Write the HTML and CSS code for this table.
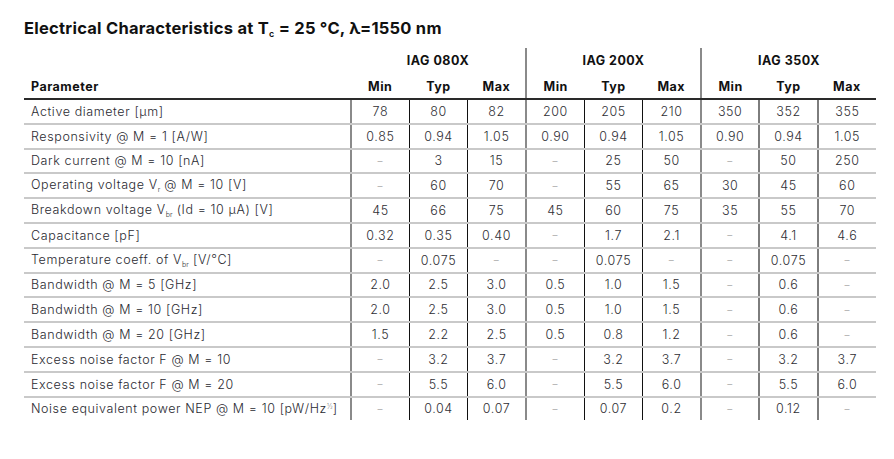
FILE: index.html
```html
<!DOCTYPE html>
<html lang="en">
<head>
    <meta charset="UTF-8">
    <title>Electrical Characteristics</title>
    <link rel="stylesheet" href="styles.css">
</head>
<body>
    <div class="sheet">
        <h2 class="title">Electrical Characteristics at T<sub>c</sub> = 25 °C, λ=1550 nm</h2>

        <table class="specs">
            <colgroup>
                <col class="col-param">
                <col span="9" class="col-val">
            </colgroup>
            <thead>
                <tr class="groups">
                    <th></th>
                    <th colspan="3">IAG 080X</th>
                    <th colspan="3" class="grp">IAG 200X</th>
                    <th colspan="3" class="grp">IAG 350X</th>
                </tr>
                <tr class="sub">
                    <th class="param">Parameter</th>
                    <th>Min</th><th>Typ</th><th>Max</th>
                    <th class="grp">Min</th><th>Typ</th><th>Max</th>
                    <th class="grp">Min</th><th>Typ</th><th>Max</th>
                </tr>
            </thead>
            <tbody>
                <tr>
                    <td class="param">Active diameter [µm]</td>
                    <td class="g1">78</td><td class="i1">80</td><td class="i1">82</td>
                    <td class="g1">200</td><td class="i1">205</td><td class="i1">210</td>
                    <td class="g1">350</td><td class="i3">352</td><td class="i3">355</td>
                </tr>
                <tr>
                    <td class="param">Responsivity @ M = 1 [A/W]</td>
                    <td class="g1">0.85</td><td class="i1">0.94</td><td class="i1">1.05</td>
                    <td class="g1">0.90</td><td class="i1">0.94</td><td class="i1">1.05</td>
                    <td class="g1">0.90</td><td class="i3">0.94</td><td class="i3">1.05</td>
                </tr>
                <tr>
                    <td class="param">Dark current @ M = 10 [nA]</td>
                    <td class="g1 na">–</td><td class="i1">3</td><td class="i1">15</td>
                    <td class="g1 na">–</td><td class="i1">25</td><td class="i1">50</td>
                    <td class="g1 na">–</td><td class="i3">50</td><td class="i3">250</td>
                </tr>
                <tr>
                    <td class="param">Operating voltage V<sub>r</sub> @ M = 10 [V]</td>
                    <td class="g1 na">–</td><td class="i1">60</td><td class="i1">70</td>
                    <td class="g1 na">–</td><td class="i1">55</td><td class="i1">65</td>
                    <td class="g1">30</td><td class="i3">45</td><td class="i3">60</td>
                </tr>
                <tr>
                    <td class="param">Breakdown voltage V<sub>br</sub> (Id = 10 µA) [V]</td>
                    <td class="g1">45</td><td class="i1">66</td><td class="i1">75</td>
                    <td class="g1">45</td><td class="i1">60</td><td class="i1">75</td>
                    <td class="g1">35</td><td class="i3">55</td><td class="i3">70</td>
                </tr>
                <tr>
                    <td class="param">Capacitance [pF]</td>
                    <td class="g1">0.32</td><td class="i1">0.35</td><td class="i1">0.40</td>
                    <td class="g1 na">–</td><td class="i1">1.7</td><td class="i1">2.1</td>
                    <td class="g1 na">–</td><td class="i3">4.1</td><td class="i3">4.6</td>
                </tr>
                <tr>
                    <td class="param">Temperature coeff. of V<sub>br</sub> [V/°C]</td>
                    <td class="g1 na">–</td><td class="i1">0.075</td><td class="i1 na">–</td>
                    <td class="g1 na">–</td><td class="i1">0.075</td><td class="i1 na">–</td>
                    <td class="g1 na">–</td><td class="i3">0.075</td><td class="i3 na">–</td>
                </tr>
                <tr>
                    <td class="param">Bandwidth @ M = 5 [GHz]</td>
                    <td class="g1">2.0</td><td class="i1">2.5</td><td class="i1">3.0</td>
                    <td class="g1">0.5</td><td class="i1">1.0</td><td class="i1">1.5</td>
                    <td class="g1 na">–</td><td class="i3">0.6</td><td class="i3 na">–</td>
                </tr>
                <tr>
                    <td class="param">Bandwidth @ M = 10 [GHz]</td>
                    <td class="g1">2.0</td><td class="i1">2.5</td><td class="i1">3.0</td>
                    <td class="g1">0.5</td><td class="i1">1.0</td><td class="i1">1.5</td>
                    <td class="g1 na">–</td><td class="i3">0.6</td><td class="i3 na">–</td>
                </tr>
                <tr>
                    <td class="param">Bandwidth @ M = 20 [GHz]</td>
                    <td class="g1">1.5</td><td class="i1">2.2</td><td class="i1">2.5</td>
                    <td class="g1">0.5</td><td class="i1">0.8</td><td class="i1">1.2</td>
                    <td class="g1 na">–</td><td class="i3">0.6</td><td class="i3 na">–</td>
                </tr>
                <tr>
                    <td class="param">Excess noise factor F @ M = 10</td>
                    <td class="g1 na">–</td><td class="i1">3.2</td><td class="i1">3.7</td>
                    <td class="g1 na">–</td><td class="i1">3.2</td><td class="i1">3.7</td>
                    <td class="g1 na">–</td><td class="i3">3.2</td><td class="i3">3.7</td>
                </tr>
                <tr>
                    <td class="param">Excess noise factor F @ M = 20</td>
                    <td class="g1 na">–</td><td class="i1">5.5</td><td class="i1">6.0</td>
                    <td class="g1 na">–</td><td class="i1">5.5</td><td class="i1">6.0</td>
                    <td class="g1 na">–</td><td class="i3">5.5</td><td class="i3">6.0</td>
                </tr>
                <tr>
                    <td class="param">Noise equivalent power NEP @ M = 10 [pW/Hz<sup>½</sup>]</td>
                    <td class="g1 na">–</td><td class="i1">0.04</td><td class="i1">0.07</td>
                    <td class="g1 na">–</td><td class="i1">0.07</td><td class="i1">0.2</td>
                    <td class="g1 na">–</td><td class="i3">0.12</td><td class="i3 na">–</td>
                </tr>
            </tbody>
        </table>
    </div>
</body>
</html>
```

FILE: styles.css
```css
body {
    margin: 0;
    background: #fff;
    font-family: Inter, "DejaVu Sans", sans-serif;
    color: #2e2e33;
}
.sheet {
    padding: 18px 24px;
}
.title {
    margin: 0 0 4px 0;
    font-size: 16.5px;
    line-height: 20px;
    font-weight: 700;
    color: #111;
    letter-spacing: 0.25px;
}
.title sub {
    font-size: 9px;
    vertical-align: -3px;
    font-weight: 600;
}
.specs {
    width: 852px;
    table-layout: fixed;
    border-collapse: collapse;
    font-size: 12.5px;
    letter-spacing: 0.6px;
}
.col-param {
    width: 327px;
}
.specs th {
    font-weight: 700;
    color: #111;
    text-align: center;
    padding: 0;
    letter-spacing: 0.5px;
}
.groups th {
    height: 24px;
    padding-bottom: 3px;
}
.sub th {
    height: 23px;
    border-bottom: 2px solid #2a2a2a;
}
.specs th.param,
.specs td.param {
    text-align: left;
    padding-left: 7px;
}
.specs th.grp {
    border-left: 2px solid #8a8a8a;
}
.specs td {
    height: 22.8px;
    padding: 0;
    text-align: center;
    border-bottom: 2px solid #c9c9c9;
    white-space: nowrap;
    font-weight: 300;
}
.specs tbody tr:last-child td {
    border-bottom: none;
}
.specs td.param {
    color: #2a2a31;
}
.specs td.g1 {
    border-left: 2px solid #8a8a8a;
}
.specs td.i1 {
    border-left: 1px solid #111;
}
.specs td.i3 {
    border-left: 2px solid #7d7d7d;
}
.specs td.na {
    color: #9a9a9a;
    font-size: 10px;
}
.specs sub {
    font-size: 7px;
    vertical-align: -3px;
    letter-spacing: 0;
}
.specs sup {
    font-size: 7px;
    vertical-align: 4px;
    color: #888;
    letter-spacing: 0;
}
```
